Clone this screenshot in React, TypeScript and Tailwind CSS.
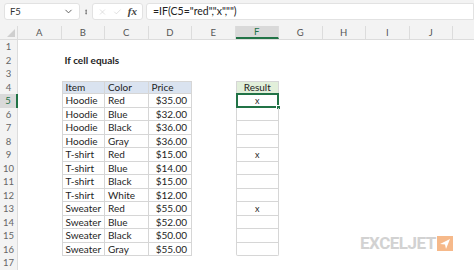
import { Check, ChevronDown, EllipsisVertical, X } from 'lucide-react';

const COLS = ['A', 'B', 'C', 'D', 'E', 'F', 'G', 'H', 'I', 'J'];

const DATA: [string, string, string][] = [
  ['Hoodie', 'Red', '$35.00'],
  ['Hoodie', 'Blue', '$32.00'],
  ['Hoodie', 'Black', '$36.00'],
  ['Hoodie', 'Gray', '$36.00'],
  ['T-shirt', 'Red', '$15.00'],
  ['T-shirt', 'Blue', '$14.00'],
  ['T-shirt', 'Black', '$15.00'],
  ['T-shirt', 'White', '$12.00'],
  ['Sweater', 'Red', '$55.00'],
  ['Sweater', 'Blue', '$52.00'],
  ['Sweater', 'Black', '$50.00'],
  ['Sweater', 'Gray', '$55.00'],
];

const cellW = 'w-[43.5px] shrink-0';
const rowH = 'h-[13.5px]';
const tbl = 'border-[#d6d6d6]';

function Row({ n }: { n: number }) {
  const idx = n - 5;
  const item = idx >= 0 && idx < DATA.length ? DATA[idx] : null;
  const isHeader = n === 4;
  const inTable = isHeader || item !== null;
  const result = item && item[1] === 'Red' ? 'x' : '';

  return (
    <div className={`flex ${rowH}`}>
      <div
        className={`w-[18px] shrink-0 flex items-center justify-center text-[9.5px] border-r ${
          n === 5
            ? 'bg-[#d9d9d9] text-[#217346] border-r-2 border-r-[#217346]'
            : 'bg-[#f3f3f3] text-[#666] border-[#dcdcdc]'
        }`}
      >
        {n}
      </div>
      <div className={cellW} />
      {n === 2 ? (
        <div className={`${cellW} flex items-center pl-[3px] font-bold text-[10px] whitespace-nowrap overflow-visible`}>
          If cell equals
        </div>
      ) : inTable ? (
        <>
          <div
            className={`${cellW} flex items-center pl-[3px] border-l border-r border-b ${tbl} ${
              isHeader ? 'bg-[#dae3f0] border-t' : ''
            }`}
          >
            {isHeader ? 'Item' : item![0]}
          </div>
          <div
            className={`${cellW} flex items-center pl-[3px] border-r border-b ${tbl} ${
              isHeader ? 'bg-[#dae3f0] border-t' : ''
            }`}
          >
            {isHeader ? 'Color' : item![1]}
          </div>
          <div
            className={`${cellW} flex items-center border-r border-b ${tbl} ${
              isHeader ? 'bg-[#dae3f0] border-t pl-[3px]' : 'justify-end pr-[4px]'
            }`}
          >
            {isHeader ? 'Price' : item![2]}
          </div>
        </>
      ) : (
        <>
          <div className={cellW} />
          <div className={cellW} />
          <div className={cellW} />
        </>
      )}
      <div className={cellW} />
      {inTable ? (
        <div
          className={`${cellW} relative flex items-center justify-center border-l border-r border-b ${tbl} ${
            isHeader ? 'bg-[#e2efda] border-t' : ''
          } ${n === 16 ? 'rounded-b-[2px]' : ''}`}
        >
          {isHeader ? 'Result' : <span className="text-[9px]">{result}</span>}
          {n === 5 && (
            <div className="absolute -left-[1px] -top-[1px] -right-[1px] -bottom-[1px] border-2 border-[#217346]">
              <div className="absolute -right-[4px] -bottom-[4px] w-[5px] h-[5px] bg-[#217346] border border-white" />
            </div>
          )}
        </div>
      ) : (
        <div className={cellW} />
      )}
    </div>
  );
}

export default function App() {
  const rows = Array.from({ length: 17 }, (_, i) => i + 1);
  return (
    <div
      className="relative w-[474px] h-[270px] overflow-hidden bg-white text-[#1e1e1e] text-[10px] leading-none"
      style={{ fontFamily: 'Lato, "Open Sans", sans-serif' }}
    >
      <div className="h-[26px] bg-[#f3f3f3] flex items-start pt-[3px] pl-[4px] gap-[3px]">
        <div className="w-[76px] h-[17px] bg-white rounded-[3px] border border-[#e2e2e2] flex items-center justify-between px-[5px] text-[9.5px] text-[#333]">
          <span>F5</span>
          <ChevronDown className="w-[11px] h-[11px] text-[#555]" strokeWidth={2} />
        </div>
        <div className="w-[6px] h-[17px] flex items-center justify-center">
          <EllipsisVertical className="w-[10px] h-[10px] text-[#555]" strokeWidth={3} />
        </div>
        <div className="w-[51px] h-[17px] bg-white rounded-[3px] border border-[#e2e2e2] flex items-center gap-[6px] px-[5px]">
          <X className="w-[10px] h-[10px] text-[#c8c8c8]" strokeWidth={1.5} />
          <Check className="w-[10px] h-[10px] text-[#c8c8c8]" strokeWidth={1.5} />
          <span
            className="italic font-bold text-[11px] text-[#444]"
            style={{ fontFamily: '"Liberation Serif", serif' }}
          >
            fx
          </span>
        </div>
        <div className="flex-1 h-[17px] bg-white rounded-l-[3px] border border-[#e2e2e2] flex items-center pl-[6px] text-[10.5px] text-[#222]">
          =IF(C5="red","x","")
        </div>
      </div>
      <div className="flex h-[14px] bg-[#f3f3f3] border-b border-[#dcdcdc]">
        <div className="w-[18px] shrink-0 relative border-r border-[#dcdcdc]">
          <div className="absolute right-[2px] bottom-[2px] w-0 h-0 border-l-[8px] border-l-transparent border-b-[8px] border-b-[#cfcfcf]" />
        </div>
        {COLS.map((c) => (
          <div
            key={c}
            className={`${cellW} flex items-center justify-center text-[9.5px] border-r ${
              c === 'F'
                ? 'bg-[#d9d9d9] text-[#217346] border-b-2 border-b-[#217346] border-r-[#dcdcdc]'
                : 'text-[#555] border-[#dcdcdc]'
            }`}
          >
            {c}
          </div>
        ))}
      </div>
      {rows.map((n) => (
        <Row key={n} n={n} />
      ))}
      <div className="absolute left-[360px] top-[235px] flex items-center gap-[1px]">
        <span
          className="font-bold text-[17px] tracking-[-0.5px] text-[#d2d2d2] leading-none"
          style={{ fontFamily: 'Roboto, "Liberation Sans", sans-serif' }}
        >
          EXCELJET
        </span>
        <svg width="16" height="15" viewBox="0 0 16 15">
          <rect width="16" height="15" fill="#f6b98a" />
          <polygon points="13,3 3,8 8,8.5 9,13" fill="#ffffff" />
        </svg>
      </div>
    </div>
  );
}
